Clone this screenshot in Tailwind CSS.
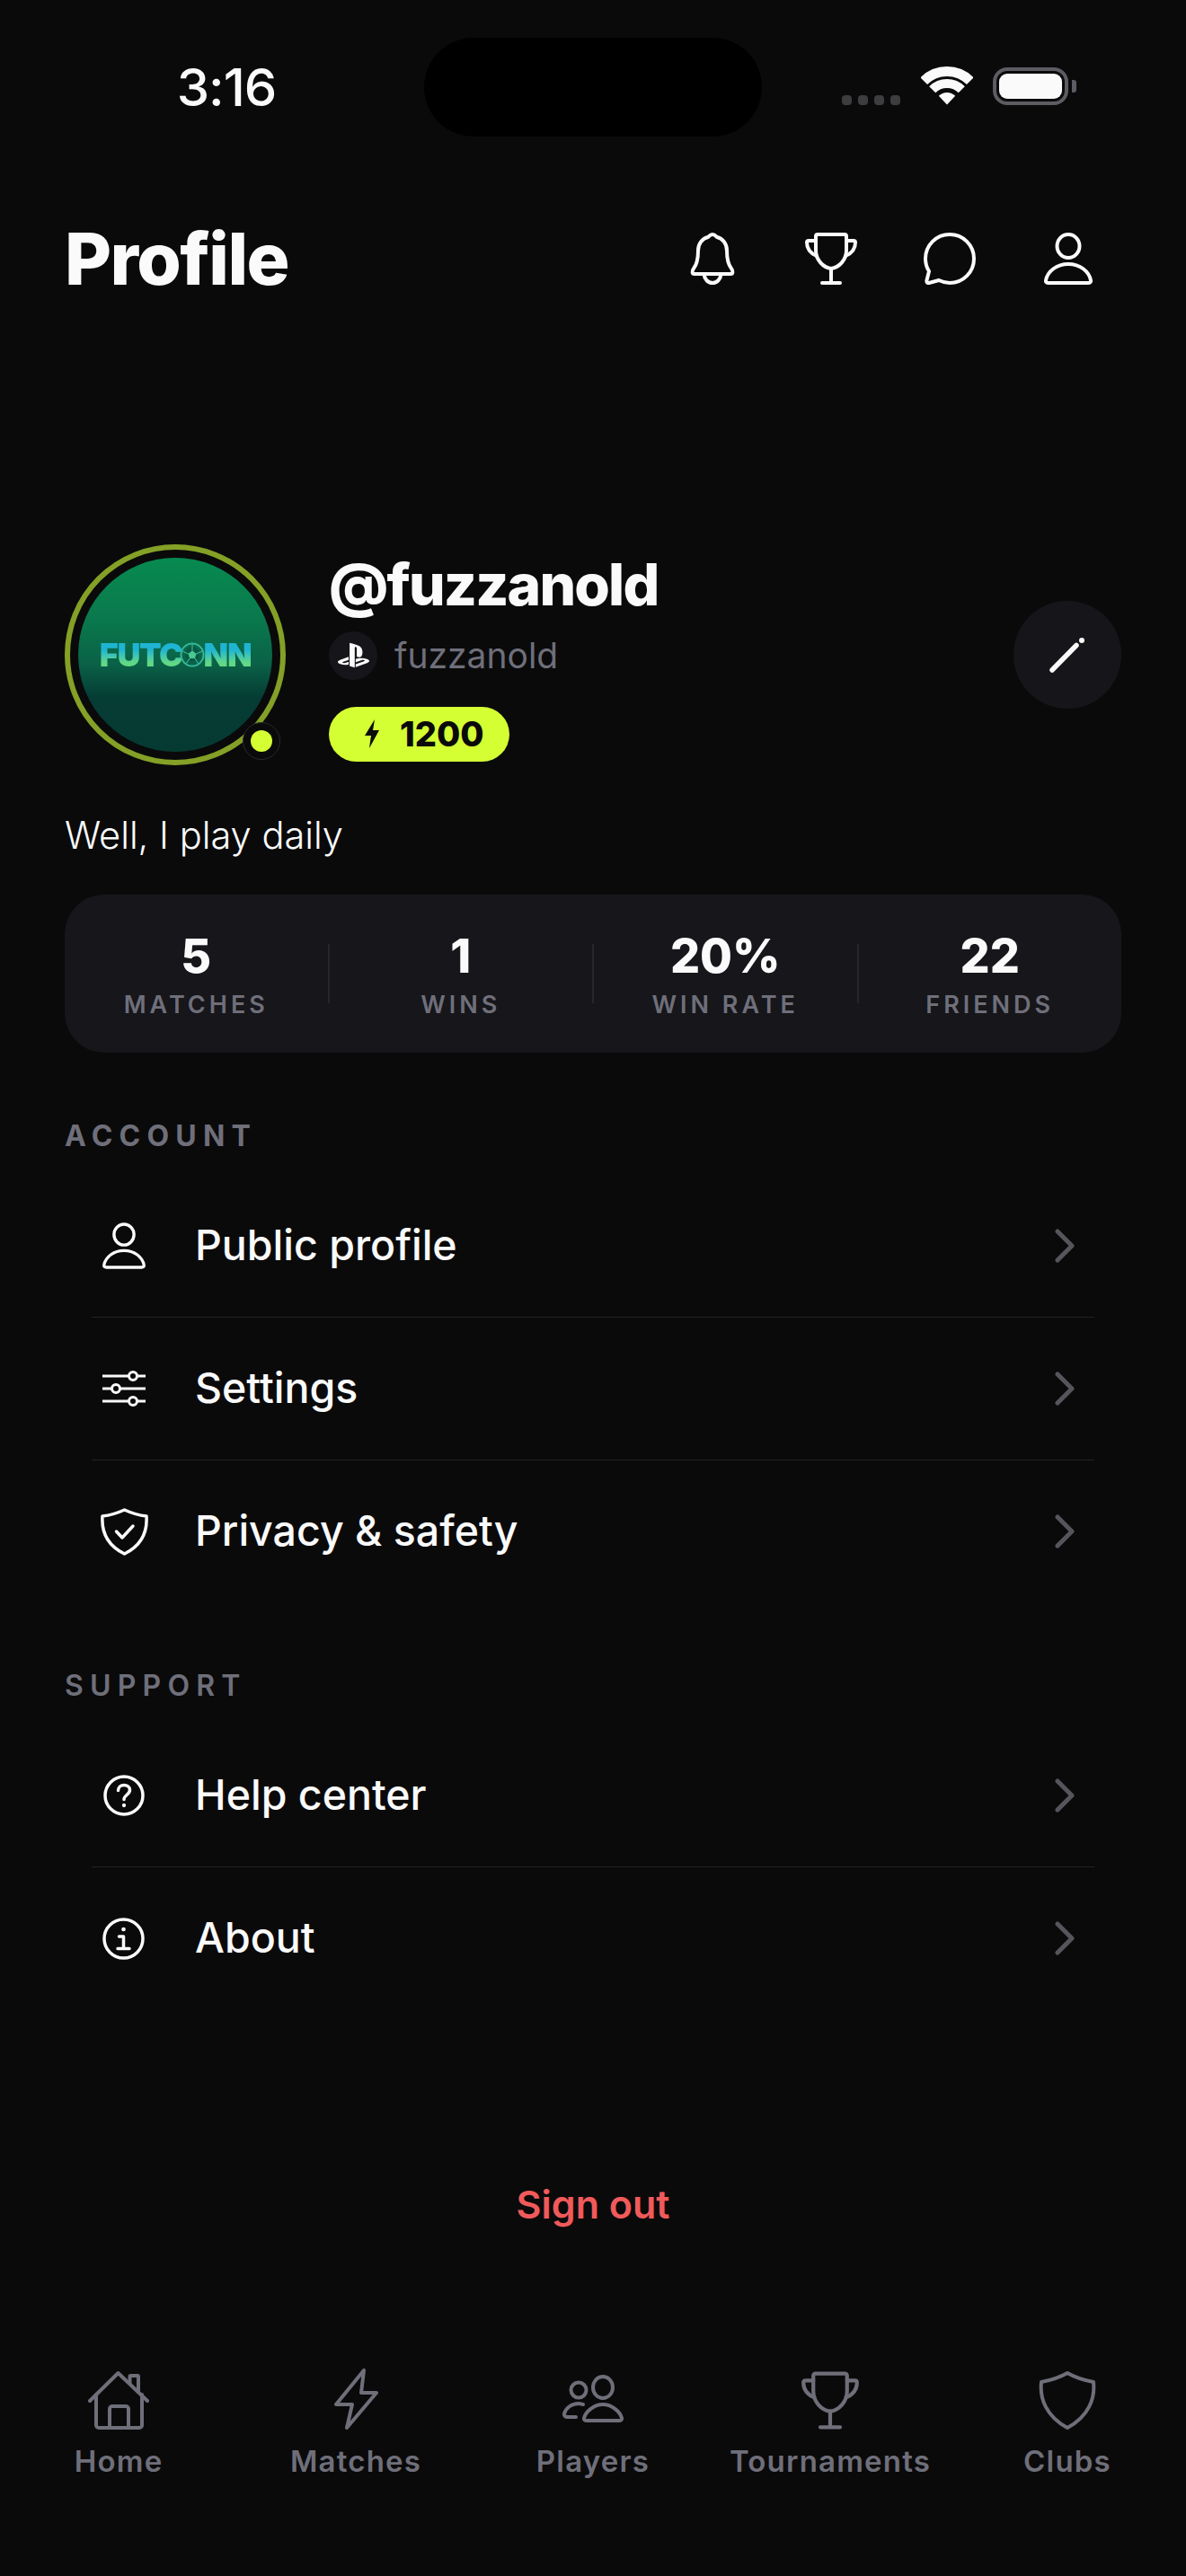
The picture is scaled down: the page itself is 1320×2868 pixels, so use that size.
<!DOCTYPE html>
<html lang="en">
<head>
	<meta charset="UTF-8" />
	<title>Profile</title>
	<script src="https://cdn.jsdelivr.net/npm/@tailwindcss/browser@4"></script>
</head>
<body class="bg-[#0a0a0b] font-['Inter',sans-serif] text-[#fafafa]">
	<div class="w-[1320px] h-[2868px] flex flex-col overflow-hidden">

		<!-- status bar -->
		<div class="h-[230px] flex items-start pt-[42px]">
			<div class="w-[472px] h-[110px] flex items-center justify-center pl-[32px]">
				<span class="text-[58px] leading-none font-medium tracking-[-1px]">3:16</span>
			</div>
			<div class="w-[376px] h-[110px] rounded-[55px] bg-black"></div>
			<div class="relative h-[110px] flex-1 flex items-end pb-[35px] pl-[89px]">
				<div class="flex gap-[7px] mb-0">
					<span class="w-[11px] h-[11px] rounded-[4px] bg-[#3d3d3f]"></span>
					<span class="w-[11px] h-[11px] rounded-[4px] bg-[#3d3d3f]"></span>
					<span class="w-[11px] h-[11px] rounded-[4px] bg-[#3d3d3f]"></span>
					<span class="w-[11px] h-[11px] rounded-[4px] bg-[#3d3d3f]"></span>
				</div>
				<svg class="ml-[23px] w-[58px] h-[43px] text-[#fafafa]" viewBox="0 0 58 43" fill="none" stroke="currentColor">
					<path d="M3.2 16.2A36.5 36.5 0 0 1 54.8 16.2" stroke-width="11" />
					<path d="M12.7 25.7A23 23 0 0 1 45.3 25.7" stroke-width="10" />
					<path d="M29 42.5L19.8 32.8A13 13 0 0 1 38.2 32.8Z" fill="currentColor" stroke="none" />
				</svg>
				<div class="ml-[22px] w-[84px] h-[42px] rounded-[16px] border-[4px] border-[#5c5c62] p-[3px]">
					<div class="w-full h-full rounded-[9px] bg-[#fafafa]"></div>
				</div>
				<div class="ml-[4px] mb-[14px] w-[5px] h-[14px] rounded-r-[3px] bg-[#5c5c62]"></div>
			</div>
		</div>

		<!-- page header -->
		<header class="h-[116px] pl-[72px] pr-[104px] flex items-center justify-between">
			<h1 class="text-[80px] leading-none font-extrabold tracking-[-1.6px]">Profile</h1>
			<div class="flex items-center h-[58px]">
				<svg class="w-[50px] h-[58px]" viewBox="0 0 50 58" fill="none" stroke="currentColor" stroke-width="4" stroke-linejoin="round">
					<path d="M25 2C27.5 2 28.5 3.5 30 5C36 6.5 41 12 41 20C41 29 42 35 46 40C48 42.5 48 46 45 46H5C2 46 2 42.5 4 40C8 35 9 29 9 20C9 12 14 6.5 20 5C21.5 3.5 22.5 2 25 2Z" />
					<path d="M15.5 46C16 52 20 56 25 56C30 56 34 52 34.5 46" />
				</svg>
				<svg class="ml-[78px] w-[58px] h-[58px]" viewBox="0 0 58 58" fill="none" stroke="currentColor" stroke-width="4" stroke-linecap="round" stroke-linejoin="round">
					<path d="M14 2H44a2 2 0 0 1 2 2V20C46 30 38 39 29 40C20 39 12 30 12 20V4a2 2 0 0 1 2-2Z" />
					<path d="M12 9H4C2.5 9 2 10 2 11C2 18 6 23 13 26M46 9H54C55.5 9 56 10 56 11C56 18 52 23 45 26" />
					<path d="M29 40V55M19 56H39" />
				</svg>
				<svg class="ml-[74px] w-[58px] h-[58px]" viewBox="0 0 58 58" fill="none" stroke="currentColor" stroke-width="4" stroke-linejoin="round">
					<path d="M29 2C44 2 56 14 56 29C56 44 44 56 29 56C25 56 21 55 17 53L6 56C4 56.5 3 55 3.5 53L6 43C3.5 39 2 34 2 29C2 14 14 2 29 2Z" />
				</svg>
				<svg class="ml-[76px] w-[54px] h-[58px]" viewBox="0 0 54 58" fill="none" stroke="currentColor" stroke-width="4" stroke-linejoin="round">
					<ellipse cx="27" cy="15" rx="12.5" ry="13" />
					<path d="M27 35C40 35 50 43 52 53C52.5 55 51 56 49 56H5C3 56 1.5 55 2 53C4 43 14 35 27 35Z" />
				</svg>
			</div>
		</header>

		<!-- profile summary -->
		<section class="mt-[260px] px-[72px]">
			<div class="flex items-center h-[246px]">
				<div class="relative w-[246px] h-[246px] rounded-full border-[6px] border-[#84a026] flex items-center justify-center shrink-0">
					<div class="w-[216px] h-[216px] rounded-full bg-[linear-gradient(180deg,#078a50_0%,#0a7a4d_30%,#0a6147_55%,#053c34_72%,#053a33_100%)] flex items-center justify-center">
						<div class="flex items-center text-[36px] leading-none font-black tracking-[-1.4px]">
							<span class="bg-linear-to-b from-[#1fb4d2] from-35% to-[#62d884] to-75% bg-clip-text text-transparent">FUTC</span>
							<svg class="w-[28px] h-[28px] -ml-[3px]" viewBox="0 0 28 28" fill="none" stroke="#35b698" stroke-width="2">
								<circle cx="14" cy="14" r="12.5" />
								<path d="M14 9.5L18.5 13L16.8 18H11.2L9.5 13Z" fill="#47c98f" stroke="none" />
								<path d="M14 4L9 6.5L6 11L7 17L10 21H18L21 17L22 11L19 6.5Z" fill="#0b4c41" stroke="none" fill-rule="evenodd" opacity=".55" />
								<path d="M14 9.5L18.5 13L16.8 18H11.2L9.5 13Z" fill="#47c98f" stroke="none" />
								<path d="M14 9.5V2M18.5 13L25 10M16.8 18L21 24M11.2 18L7 24M9.5 13L3 10" stroke-width="1.2" />
							</svg>
							<span class="bg-linear-to-b from-[#1fb4d2] from-35% to-[#62d884] to-75% bg-clip-text text-transparent -ml-[1px]">NN</span>
						</div>
					</div>
					<span class="absolute left-[192px] top-[192px] w-[42px] h-[42px] rounded-full bg-[#0a0a0b] border border-[#2a2a2e] flex items-center justify-center">
						<span class="w-[24px] h-[24px] rounded-full bg-[#d4ff33]"></span>
					</span>
				</div>
				<div class="ml-[48px] flex flex-col">
					<p class="h-[80px] text-[64px] leading-[80px] font-extrabold tracking-[-1.8px]">@fuzzanold</p>
					<div class="mt-[12px] flex items-center">
						<span class="w-[54px] h-[54px] rounded-full bg-[#16161a] flex items-center justify-center">
							<svg class="w-[35px] h-[35px] text-[#fafafa]" viewBox="0 0 24 24" fill="currentColor">
								<path d="M8.984 2.596v17.547l3.915 1.261V6.688c0-.69.304-1.151.794-.991.636.18.76.814.76 1.505v5.875c2.441 1.193 4.362-.002 4.362-3.152 0-3.237-1.126-4.675-4.438-5.827-1.307-.448-3.728-1.186-5.39-1.502zm4.656 16.241l6.296-2.275c.715-.258.826-.625.246-.818-.586-.192-1.637-.139-2.357.123l-4.205 1.5V14.98l.24-.085s1.201-.42 2.913-.615c1.696-.18 3.785.03 5.437.661 1.848.601 2.04 1.472 1.576 2.072-.465.6-1.622 1.036-1.622 1.036l-8.544 3.107V18.86zM1.807 18.6c-1.9-.545-2.214-1.668-1.352-2.32.801-.586 2.16-1.052 2.16-1.052l5.615-2.013v2.313L4.205 17c-.705.271-.825.632-.239.826.586.195 1.637.15 2.343-.12L8.247 17v2.074c-.12.03-.256.044-.39.073-1.939.331-3.996.196-6.038-.479z" />
							</svg>
						</span>
						<span class="ml-[19px] text-[39px] leading-none text-[#6f6f7a]">fuzzanold</span>
					</div>
					<div class="mt-[30px] w-[201px] h-[61px] rounded-full bg-[#d4ff33] flex items-center pl-[39px] text-[#0a0a0b]">
						<svg class="w-[18px] h-[32px]" viewBox="0 0 18 32" fill="currentColor"><path d="M12 0L1 18H8L6 32L17 12H10Z" /></svg>
						<span class="ml-[22px] text-[38px] leading-none font-extrabold">1200</span>
					</div>
				</div>
				<button class="ml-auto w-[120px] h-[120px] rounded-full bg-[#16161a] flex items-center justify-center">
					<svg class="w-[40px] h-[40px]" viewBox="0 0 40 40" fill="#fafafa" stroke="#fafafa" stroke-linecap="round">
						<path d="M3 37L30 9.5" stroke-width="5.5" fill="none" />
						<circle cx="36" cy="4" r="3" stroke="none" />
					</svg>
				</button>
			</div>
			<p class="mt-[48px] h-[60px] text-[41.6px] leading-[60px] font-light">Well, I play daily</p>

			<!-- stats -->
			<div class="mt-[36px] h-[176px] rounded-[44px] bg-[#16161b] flex items-center">
				<div class="flex-1 flex flex-col items-center">
					<span class="text-[52px] leading-[64px] font-extrabold">5</span>
					<span class="mt-[5px] text-[27px] leading-[34px] font-semibold tracking-[4px] text-[#6f6f7a]">MATCHES</span>
				</div>
				<span class="w-[2px] h-[66px] bg-[#26262c]"></span>
				<div class="flex-1 flex flex-col items-center">
					<span class="text-[52px] leading-[64px] font-extrabold">1</span>
					<span class="mt-[5px] text-[27px] leading-[34px] font-semibold tracking-[4px] text-[#6f6f7a]">WINS</span>
				</div>
				<span class="w-[2px] h-[66px] bg-[#26262c]"></span>
				<div class="flex-1 flex flex-col items-center">
					<span class="text-[52px] leading-[64px] font-extrabold">20%</span>
					<span class="mt-[5px] text-[27px] leading-[34px] font-semibold tracking-[4px] text-[#6f6f7a]">WIN RATE</span>
				</div>
				<span class="w-[2px] h-[66px] bg-[#26262c]"></span>
				<div class="flex-1 flex flex-col items-center">
					<span class="text-[52px] leading-[64px] font-extrabold">22</span>
					<span class="mt-[5px] text-[27px] leading-[34px] font-semibold tracking-[4px] text-[#6f6f7a]">FRIENDS</span>
				</div>
			</div>
		</section>

		<!-- account -->
		<section class="mt-[73px]">
			<h2 class="pl-[72px] h-[63px] text-[32px] leading-[40px] font-bold tracking-[7.2px] text-[#6f6f7a]">ACCOUNT</h2>
			<div class="mx-[102px]">
				<div class="h-[159px] border-b border-[#222226] flex items-center">
					<span class="w-[115px] shrink-0">
						<svg class="ml-[12px] w-[48px] h-[52px]" viewBox="0 0 54 58" fill="none" stroke="currentColor" stroke-width="3.8" stroke-linejoin="round">
							<ellipse cx="27" cy="15" rx="12.5" ry="13" />
							<path d="M27 35C40 35 50 43 52 53C52.5 55 51 56 49 56H5C3 56 1.5 55 2 53C4 43 14 35 27 35Z" />
						</svg>
					</span>
					<span class="-mt-[2px] text-[46.5px] leading-none font-medium">Public profile</span>
					<svg class="ml-auto mr-[21px] w-[24px] h-[38px] text-[#55555c]" viewBox="0 0 24 38" fill="none" stroke="currentColor" stroke-width="5" stroke-linecap="round" stroke-linejoin="round"><path d="M4 3L20 19L4 35" /></svg>
				</div>
				<div class="h-[159px] border-b border-[#222226] flex items-center">
					<span class="w-[115px] shrink-0">
						<svg class="ml-[12px] w-[48px] h-[40px]" viewBox="0 0 48 40" fill="none" stroke="currentColor" stroke-width="3">
							<path d="M0 6H29M39 6H48M0 20H10M20 20H48M0 34H29M39 34H48" />
							<circle cx="34" cy="6" r="4.5" />
							<circle cx="15" cy="20" r="4.5" />
							<circle cx="34" cy="34" r="4.5" />
						</svg>
					</span>
					<span class="-mt-[2px] text-[46.5px] leading-none font-medium">Settings</span>
					<svg class="ml-auto mr-[21px] w-[24px] h-[38px] text-[#55555c]" viewBox="0 0 24 38" fill="none" stroke="currentColor" stroke-width="5" stroke-linecap="round" stroke-linejoin="round"><path d="M4 3L20 19L4 35" /></svg>
				</div>
				<div class="h-[158px] flex items-center">
					<span class="w-[115px] shrink-0">
						<svg class="ml-[10px] w-[53px] h-[53px]" viewBox="0 0 53 53" fill="none" stroke="currentColor" stroke-width="3.5" stroke-linecap="round" stroke-linejoin="round">
							<path d="M26.5 2C33 5 42 8 51 9C52 24 47 41 26.5 51C6 41 1 24 2 9C11 8 20 5 26.5 2Z" />
							<path d="M17.5 26L24 33L36 20" />
						</svg>
					</span>
					<span class="-mt-[2px] text-[46.5px] leading-none font-medium">Privacy &amp; safety</span>
					<svg class="ml-auto mr-[21px] w-[24px] h-[38px] text-[#55555c]" viewBox="0 0 24 38" fill="none" stroke="currentColor" stroke-width="5" stroke-linecap="round" stroke-linejoin="round"><path d="M4 3L20 19L4 35" /></svg>
				</div>
			</div>
		</section>

		<!-- support -->
		<section class="mt-[73px]">
			<h2 class="pl-[72px] h-[63px] text-[32px] leading-[40px] font-semibold tracking-[7.2px] text-[#6f6f7a]">SUPPORT</h2>
			<div class="mx-[102px]">
				<div class="h-[159px] border-b border-[#222226] flex items-center">
					<span class="w-[115px] shrink-0">
						<svg class="ml-[13px] w-[46px] h-[46px]" viewBox="0 0 46 46" fill="none" stroke="currentColor" stroke-width="3.5" stroke-linecap="round">
							<circle cx="23" cy="23" r="21" />
							<path d="M16.5 17.5C16.5 13.5 19.5 11.5 23 11.5C26.5 11.5 29.5 13.5 29.5 17C29.5 22 23 22.5 23 27.5" />
							<circle cx="23" cy="34" r="1.4" fill="currentColor" stroke-width="1.5" />
						</svg>
					</span>
					<span class="-mt-[2px] text-[46.5px] leading-none font-medium">Help center</span>
					<svg class="ml-auto mr-[21px] w-[24px] h-[38px] text-[#55555c]" viewBox="0 0 24 38" fill="none" stroke="currentColor" stroke-width="5" stroke-linecap="round" stroke-linejoin="round"><path d="M4 3L20 19L4 35" /></svg>
				</div>
				<div class="h-[158px] flex items-center">
					<span class="w-[115px] shrink-0">
						<svg class="ml-[12px] w-[47px] h-[47px]" viewBox="0 0 47 47" fill="none" stroke="currentColor" stroke-width="3.5" stroke-linecap="round" stroke-linejoin="round">
							<circle cx="23.5" cy="23.5" r="21.5" />
							<path d="M18.5 21H23.5V34M17 34.5H30" />
							<circle cx="23.5" cy="13" r="1.6" fill="currentColor" stroke-width="1.5" />
						</svg>
					</span>
					<span class="-mt-[2px] text-[46.5px] leading-none font-medium">About</span>
					<svg class="ml-auto mr-[21px] w-[24px] h-[38px] text-[#55555c]" viewBox="0 0 24 38" fill="none" stroke="currentColor" stroke-width="5" stroke-linecap="round" stroke-linejoin="round"><path d="M4 3L20 19L4 35" /></svg>
				</div>
			</div>
		</section>

		<button class="mt-[191px] h-[52px] text-[43px] leading-[52px] font-semibold text-[#f05a5a]">Sign out</button>

		<!-- tab bar -->
		<nav class="mt-[157px] grid grid-cols-5 text-[#6f6f7a]">
			<div class="flex flex-col items-center">
				<div class="h-[68px] flex items-end">
					<svg class="w-[68px] h-[66px]" viewBox="0 0 68 66" fill="none" stroke="currentColor" stroke-width="4" stroke-linecap="round" stroke-linejoin="round">
						<path d="M2 34L33.5 3L66 34" />
						<path d="M9 27V61a3 3 0 0 0 3 3H57a3 3 0 0 0 3-3V27" />
						<path d="M24 63V43a3 3 0 0 1 3-3H42a3 3 0 0 1 3 3V63" />
						<path d="M46.5 14V7a1 1 0 0 1 1-1H55a1 1 0 0 1 1 1V24" />
					</svg>
				</div>
				<span class="mt-[15px] text-[33px] leading-[40px] font-semibold tracking-[1.2px]">Home</span>
			</div>
			<div class="flex flex-col items-center">
				<div class="h-[68px] flex items-end">
					<svg class="w-[50px] h-[68px]" viewBox="0 0 50 68" fill="none" stroke="currentColor" stroke-width="4" stroke-linecap="round" stroke-linejoin="round">
						<path d="M34 2L3 40H21L15 66L48 27H31Z" />
					</svg>
				</div>
				<span class="mt-[15px] text-[33px] leading-[40px] font-semibold tracking-[1.2px]">Matches</span>
			</div>
			<div class="flex flex-col items-center">
				<div class="h-[68px] flex items-end">
					<svg class="w-[70px] h-[56px] mb-[7px]" viewBox="0 0 70 56" fill="none" stroke="currentColor" stroke-width="4" stroke-linecap="round" stroke-linejoin="round">
						<ellipse cx="46" cy="16" rx="11" ry="12" />
						<path d="M46 35C56 35 65 43 67 50C67.5 52 66 53 64 53H28C26 53 24.5 52 25 50C27 43 36 35 46 35Z" />
						<circle cx="19" cy="19" r="8.5" />
						<path d="M24 35C22 34.5 21 34 19 34C11 34 5 39 3 45C2.5 47 4 49 6 49H16" />
					</svg>
				</div>
				<span class="mt-[15px] text-[33px] leading-[40px] font-semibold tracking-[1.2px]">Players</span>
			</div>
			<div class="flex flex-col items-center">
				<div class="h-[68px] flex items-end">
					<svg class="w-[64px] h-[65px]" viewBox="0 0 58 58" fill="none" stroke="currentColor" stroke-width="3.8" stroke-linecap="round" stroke-linejoin="round">
						<path d="M14 2H44a2 2 0 0 1 2 2V20C46 30 38 39 29 40C20 39 12 30 12 20V4a2 2 0 0 1 2-2Z" />
						<path d="M12 9H4C2.5 9 2 10 2 11C2 18 6 23 13 26M46 9H54C55.5 9 56 10 56 11C56 18 52 23 45 26" />
						<path d="M29 40V55M19 56H39" />
					</svg>
				</div>
				<span class="mt-[15px] text-[33px] leading-[40px] font-semibold tracking-[1.2px]">Tournaments</span>
			</div>
			<div class="flex flex-col items-center">
				<div class="h-[68px] flex items-end">
					<svg class="w-[64px] h-[65px]" viewBox="0 0 64 65" fill="none" stroke="currentColor" stroke-width="4" stroke-linecap="round" stroke-linejoin="round">
						<path d="M32 2C39 6 50 10 61 12C63 30 56 50 32 63C8 50 1 30 3 12C14 10 25 6 32 2Z" />
					</svg>
				</div>
				<span class="mt-[15px] text-[33px] leading-[40px] font-semibold tracking-[1.2px]">Clubs</span>
			</div>
		</nav>
	</div>
</body>
</html>
